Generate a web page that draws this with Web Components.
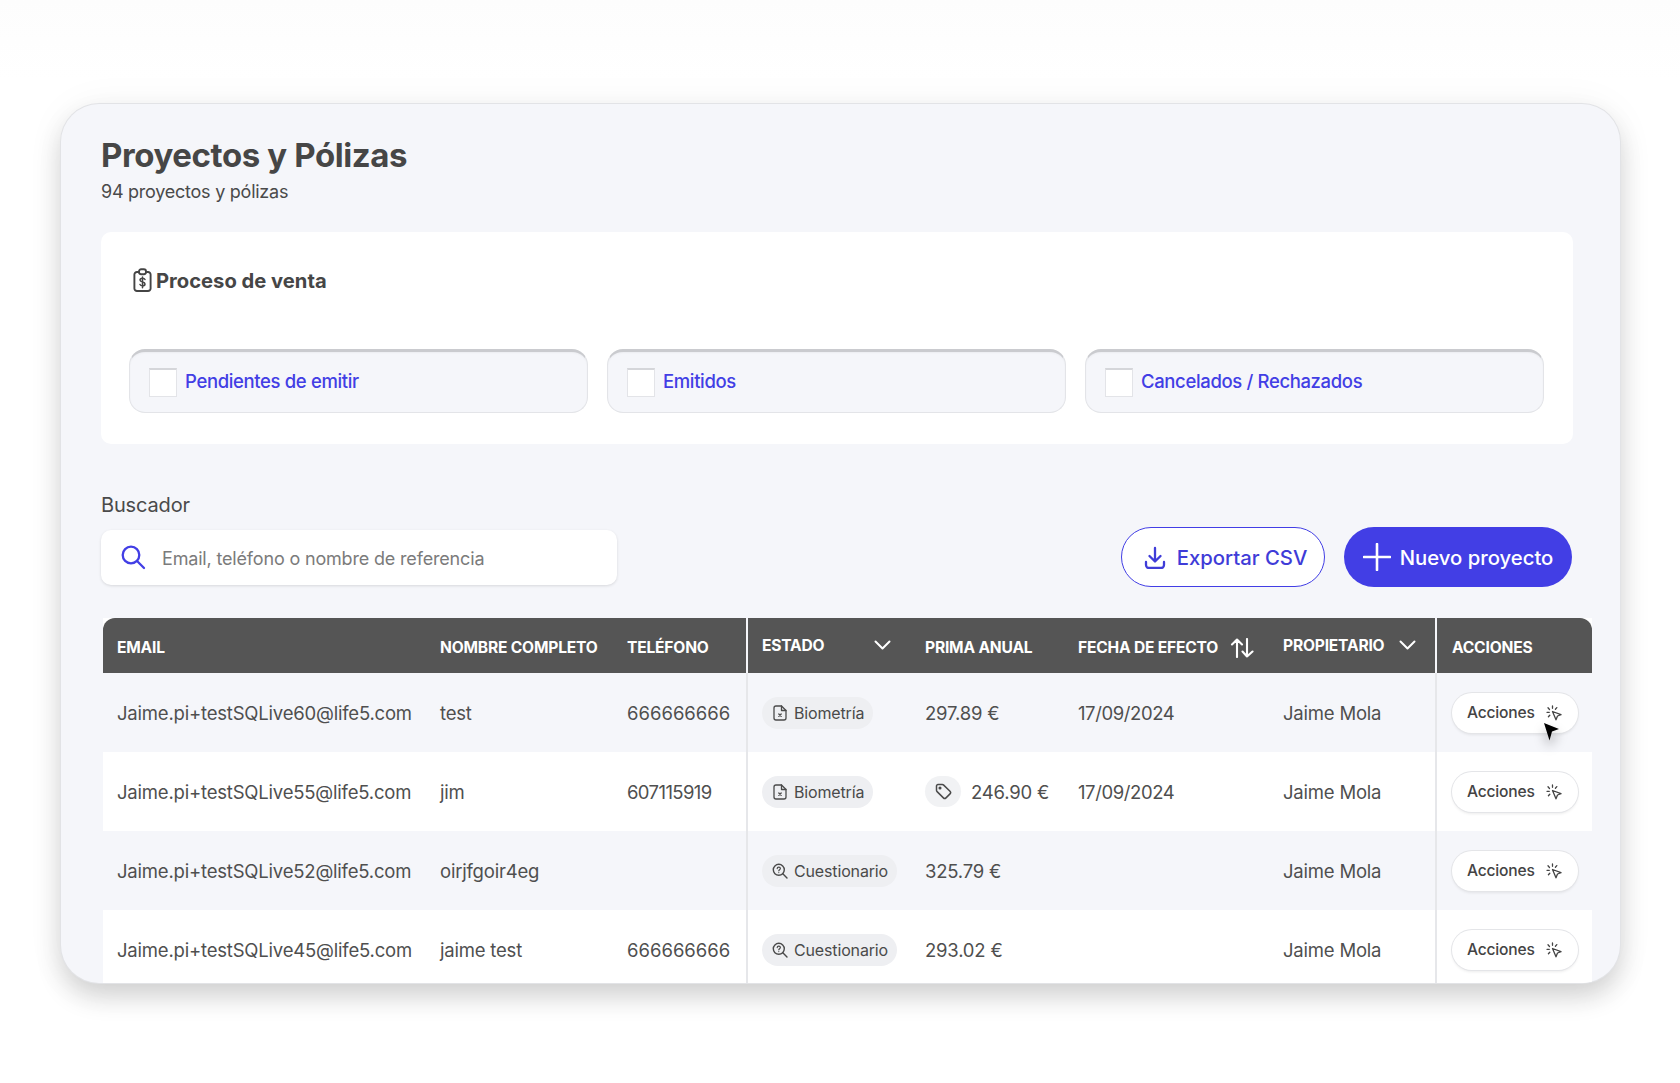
<!DOCTYPE html>
<html lang="es"><head><meta charset="utf-8"><title>Proyectos y Pólizas</title>
<style>
html,body{margin:0;height:1083px;overflow:hidden;background:#fff;font-family:Inter,"Noto Sans",sans-serif;color:#4a4a4a}
body{padding:104px 60px 100px 61px;box-sizing:border-box;background:linear-gradient(#fdfdfd,#fff 80px)}
</style></head><body>
<app-card>
  <page-head title="Proyectos y Pólizas" sub="94 proyectos y pólizas"></page-head>
  <sale-panel></sale-panel>
  <search-bar></search-bar>
  <data-table>
    <table-head></table-head>
    <table-row bg="#f5f6fa" email="Jaime.pi+testSQLive60@life5.com" name="test" tel="666666666" state="bio" prima="297.89 €" fecha="17/09/2024"></table-row>
    <table-row bg="#fff" email="Jaime.pi+testSQLive55@life5.com" name="jim" tel="607115919" tight state="bio" prima="246.90 €" tag fecha="17/09/2024"></table-row>
    <table-row bg="#f5f6fa" email="Jaime.pi+testSQLive52@life5.com" name="oirjfgoir4eg" tel="" state="cue" prima="325.79 €" fecha=""></table-row>
    <table-row bg="#fff" email="Jaime.pi+testSQLive45@life5.com" name="jaime test" tel="666666666" state="cue" prima="293.02 €" fecha=""></table-row>
  </data-table>
</app-card>
<script>
const I={
 clip:'<svg width="19" height="24" viewBox="0 0 19 24" fill="none" stroke="#444" stroke-width="1.9" stroke-linecap="round" stroke-linejoin="round"><path d="M6 4H4a2.6 2.6 0 0 0-2.6 2.6v13.8A2.6 2.6 0 0 0 4 23h11a2.6 2.6 0 0 0 2.6-2.6V6.600A2.600 2.600 0 0 0 15 4h-2"/><rect x="6" y="1.200" width="7" height="5" rx="2.200"/><path d="M12 11.500c-.4-.9-1.300-1.300-2.500-1.300-1.500 0-2.500.7-2.500 1.900 0 2.500 5 1.300 5 3.800 0 1.200-1 1.900-2.500 1.900-1.200 0-2.100-.5-2.500-1.300M9.500 9v10.800" stroke-width="1.500"/></svg>',
 search:'<svg width="26" height="26" viewBox="0 0 26 26" fill="none" stroke="#423ee5" stroke-width="2.300" stroke-linecap="round"><circle cx="11" cy="11" r="8.300"/><path d="M17.300 17.300 24 24"/></svg>',
 down:'<svg width="22" height="23" viewBox="0 0 22 23" fill="none" stroke="#3f3cd8" stroke-width="2.300" stroke-linecap="round" stroke-linejoin="round"><path d="M11 2v13M5.500 10 11 15.500 16.500 10M2 16v3a3 3 0 0 0 3 3h12a3 3 0 0 0 3-3v-3"/></svg>',
 plus:'<svg width="28" height="28" viewBox="0 0 28 28" fill="none" stroke="#fff" stroke-width="2.600" stroke-linecap="round"><path d="M14 1v26M1 14h26"/></svg>',
 chev:'<svg width="17" height="10" viewBox="0 0 17 10" fill="none" stroke="#fff" stroke-width="2" stroke-linecap="round" stroke-linejoin="round"><path d="M1.500 1.500 8.500 8.500 15.500 1.500"/></svg>',
 file:'<svg width="14" height="16" viewBox="0 0 14 16" fill="none" stroke="#4a4a4a" stroke-width="1.300" stroke-linecap="round" stroke-linejoin="round"><path d="M8.500 1H3a2 2 0 0 0-2 2v10a2 2 0 0 0 2 2h8a2 2 0 0 0 2-2V5.500z"/><path d="M8.500 1v4.500H13M5.800 9l2.400 2.400M8.200 9l-2.400 2.400"/></svg>',
 zoom:'<svg width="16" height="16" viewBox="0 0 16 16" fill="none" stroke="#4a4a4a" stroke-width="1.400" stroke-linecap="round" stroke-linejoin="round"><circle cx="6.800" cy="6.800" r="5.500"/><path d="M10.800 10.800 15 15"/><path d="M5.200 5.600c0-.9.700-1.500 1.600-1.500s1.600.6 1.600 1.400c0 1.100-1.600 1.200-1.600 2.300" stroke-width="1.200"/><path d="M6.800 9.500v.1" stroke-width="1.200"/></svg>',
 tag:'<svg width="17" height="17" viewBox="0 0 17 17" fill="none" stroke="#4a4a4a" stroke-width="1.500" stroke-linecap="round" stroke-linejoin="round"><path d="M1.500 3v4.200c0 .5.200 1 .6 1.400l6.300 6.300c.7.700 1.900.7 2.600 0l4-4c.7-.7.700-1.900 0-2.600L8.700 2.100C8.300 1.700 7.800 1.500 7.300 1.500H3A1.500 1.500 0 0 0 1.500 3z"/><circle cx="5" cy="5" r=".8"/></svg>',
 act:'<svg width="16" height="16" viewBox="0 0 16 16" fill="none" stroke="#444" stroke-width="1.300" stroke-linecap="round" stroke-linejoin="round"><path d="M6.500 1v2.300M2 2.800 3.500 4.500M1 7.300h2.300M3.800 10.200 2.400 11.800M10.800 2.600 9.400 4.200"/><path d="M6.500 6.500 15 9.700 11.500 11 10 14.800z"/></svg>'
};
function def(name,css,html){customElements.define(name,class extends HTMLElement{
 connectedCallback(){if(this.shadowRoot)return;const a=k=>this.getAttribute(k);const r=this.attachShadow({mode:'open'});r.innerHTML='<style>'+css+'</style>'+html(a,this)}
})}
def('app-card',`:host{display:block;height:879px;box-sizing:border-box;padding:31px 47px 0 40px;background:#f5f6fa;border-radius:38px;overflow:hidden;box-shadow:0 0 0 1px #e2e3e6,0 14px 26px rgba(0,0,0,.16),0 2px 40px rgba(0,0,0,.05)}`,()=>'<slot></slot>');
def('page-head',`:host{display:block}h1{margin:0;font-size:33px;line-height:40px;font-weight:700;color:#464646;letter-spacing:-.4px}p{margin:5px 0 0;font-size:18px;line-height:24px;color:#4a4a4a;letter-spacing:-.25px}`,a=>`<h1>${a('title')}</h1><p>${a('sub')}</p>`);
def('sale-panel',`:host{display:block;margin-top:28px;height:212px;box-sizing:border-box;padding:33px 29px 0 28px;background:#fff;border-radius:10px}
.t{display:flex;align-items:center;gap:4px;height:30px;font-size:20.2px;font-weight:700;color:#464646;padding-left:4px}
.g{display:grid;grid-template-columns:repeat(3,1fr);gap:19px;margin-top:54px}`,()=>`<div class="t">${I.clip}<span>Proceso de venta</span></div><div class="g"><filter-card label="Pendientes de emitir"></filter-card><filter-card label="Emitidos"></filter-card><filter-card label="Cancelados / Rechazados"></filter-card></div>`);
def('filter-card',`:host{display:flex;align-items:center;gap:8px;height:64px;box-sizing:border-box;padding:0 19px;background:#f5f6fa;border:1px solid #e3e4e8;border-top:3px solid #cacbcf;border-radius:16px;box-shadow:inset 0 1px 2px rgba(0,0,0,.04);font-size:18.500px;letter-spacing:-.36px;font-weight:500;color:#423ee5}
i{width:26px;height:26px;background:#fff;border:1px solid #e3e4e8;border-top:2px solid #d5d6da;display:block}
span{margin-top:-2px}`,a=>`<i></i><span>${a('label')}</span>`);
def('search-bar',`:host{display:block;margin-top:47px}
label{display:block;font-size:20px;letter-spacing:-.15px;line-height:28px;color:#4a4a4a;margin-bottom:8px}
.r{display:flex;align-items:center;height:60px}
.i{display:flex;align-items:center;gap:15px;width:516px;height:55px;box-sizing:border-box;padding-left:19px;background:#fff;border-radius:10px;box-shadow:0 1px 3px rgba(0,0,0,.12);font-size:18px;letter-spacing:-.17px;color:#7b7b7b}
.i span{margin-top:3px;margin-left:1px}
.s{flex:1}
.b{display:flex;align-items:center;justify-content:center;height:60px;box-sizing:border-box;border-radius:30px;font-size:20.300px;font-weight:500}
.e{width:204px;gap:11px;padding-left:5px;background:#fff;border:1.500px solid #423ee5;color:#3f3cd8}
.n{width:228px;gap:9px;margin-left:19px;background:#423ee5;color:#fff;margin-right:1px}`,()=>`<label>Buscador</label><div class="r"><div class="i">${I.search}<span>Email, teléfono o nombre de referencia</span></div><div class="s"></div><div class="b e">${I.down}<span>Exportar CSV</span></div><div class="b n">${I.plus}<span>Nuevo proyecto</span></div></div>`);
const GRID='grid-template-columns:323px 187px 133px 2px 163px 153px 205px 166px 2px 155px';
def('data-table',`:host{display:block;margin:31px -19px 0 2px;background:#fff}`,()=>'<slot></slot>');
def('table-head',`:host{display:grid;${GRID};height:55px;background:#555;border-radius:12px 12px 0 0;color:#fff;font-size:15.600px;font-weight:700;align-items:center;letter-spacing:-.2px;position:relative}
span{padding-left:14px;white-space:nowrap;display:flex;align-items:center;margin-top:4px}
.up{margin-top:-1px}
b{background:#f5f6fa;height:100%;display:block;font-weight:400}
svg{margin-left:auto;flex:none}`,()=>`<span>EMAIL</span><span>NOMBRE COMPLETO</span><span>TELÉFONO</span><b></b><span class="up" style="padding-right:20px">ESTADO${I.chev}</span><span>PRIMA ANUAL</span><span>FECHA DE EFECTO<svg style="margin-left:12px" width="24" height="20" viewBox="0 0 24 20" fill="none" stroke="#fff" stroke-width="2.100" stroke-linecap="round" stroke-linejoin="round"><path d="M7 19V1.500M2 6.500 7 1.500 12 6.500M17 1v17.500M12.500 13.500 17 18.500 22.500 13.500"/></svg></span><span class="up" style="padding-right:19px">PROPIETARIO${I.chev}</span><b></b><span style="padding-left:15px">ACCIONES</span>`);
def('state-pill',`:host{display:inline-flex;align-items:center;gap:7px;height:32px;padding:0 9px 0 11px;border-radius:16px;background:#eeeff2;font-size:16px;letter-spacing:-.15px;color:#4a4a4a}
.ic{display:flex;width:14px;justify-content:center}
svg{flex:none}`,(a)=>`<span class="ic">${a('kind')==='bio'?I.file:I.zoom}</span><span>${a('kind')==='bio'?'Biometría':'Cuestionario'}</span>`);
def('act-button',`:host{display:inline-flex;align-items:center;gap:11px;height:40px;width:126px;box-sizing:border-box;padding-left:15px;border-radius:21px;background:#fff;box-shadow:0 0 0 1px #e4e5e8,0 2px 3px rgba(0,0,0,.08);font-size:15.600px;font-weight:500;color:#444;position:relative}
.cur{position:absolute;left:91px;top:29px;filter:drop-shadow(0 7px 6px rgba(0,0,0,.35))}`,(a,el)=>`<span>Acciones</span>${I.act}${el.hasAttribute('cursor')?'<svg class="cur" width="17" height="21" viewBox="0 0 17 21"><path d="M1 1 16 7 9 9.500 6.500 18.500z" fill="#000"/></svg>':''}`);
def('table-row',`:host{display:grid;${GRID};height:79px;align-items:center;font-size:18.500px;letter-spacing:-.2px;color:#4f4f4f;white-space:nowrap}
.c{padding-left:14px}
.t{letter-spacing:0}
.t.tight{letter-spacing:-.6px}
.f{letter-spacing:-.4px}
.a{padding-left:15px;display:flex}
.d{height:100%;background:#e6e7ea;width:2px;justify-self:center}
.p{display:flex;align-items:center;gap:10px}
.tg{display:inline-flex;align-items:center;justify-content:center;width:36px;height:31px;border-radius:16px;background:#f1f2f4}`,(a,el)=>{
 const cur=el.getAttribute('email').includes('60');
 return `<style>:host{background:${a('bg')}}</style><div class="c">${a('email')}</div><div class="c">${a('name')}</div><div class="c t ${el.hasAttribute('tight')?'tight':''}">${a('tel')}</div><div class="d"></div><div class="c"><state-pill kind="${a('state')}"></state-pill></div><div class="c p">${el.hasAttribute('tag')?`<span class="tg">${I.tag}</span>`:''}<span>${a('prima')}</span></div><div class="c f">${a('fecha')}</div><div class="c">Jaime Mola</div><div class="d"></div><div class="a"><act-button ${cur?'cursor':''}></act-button></div>`});
</script>
</body></html>
